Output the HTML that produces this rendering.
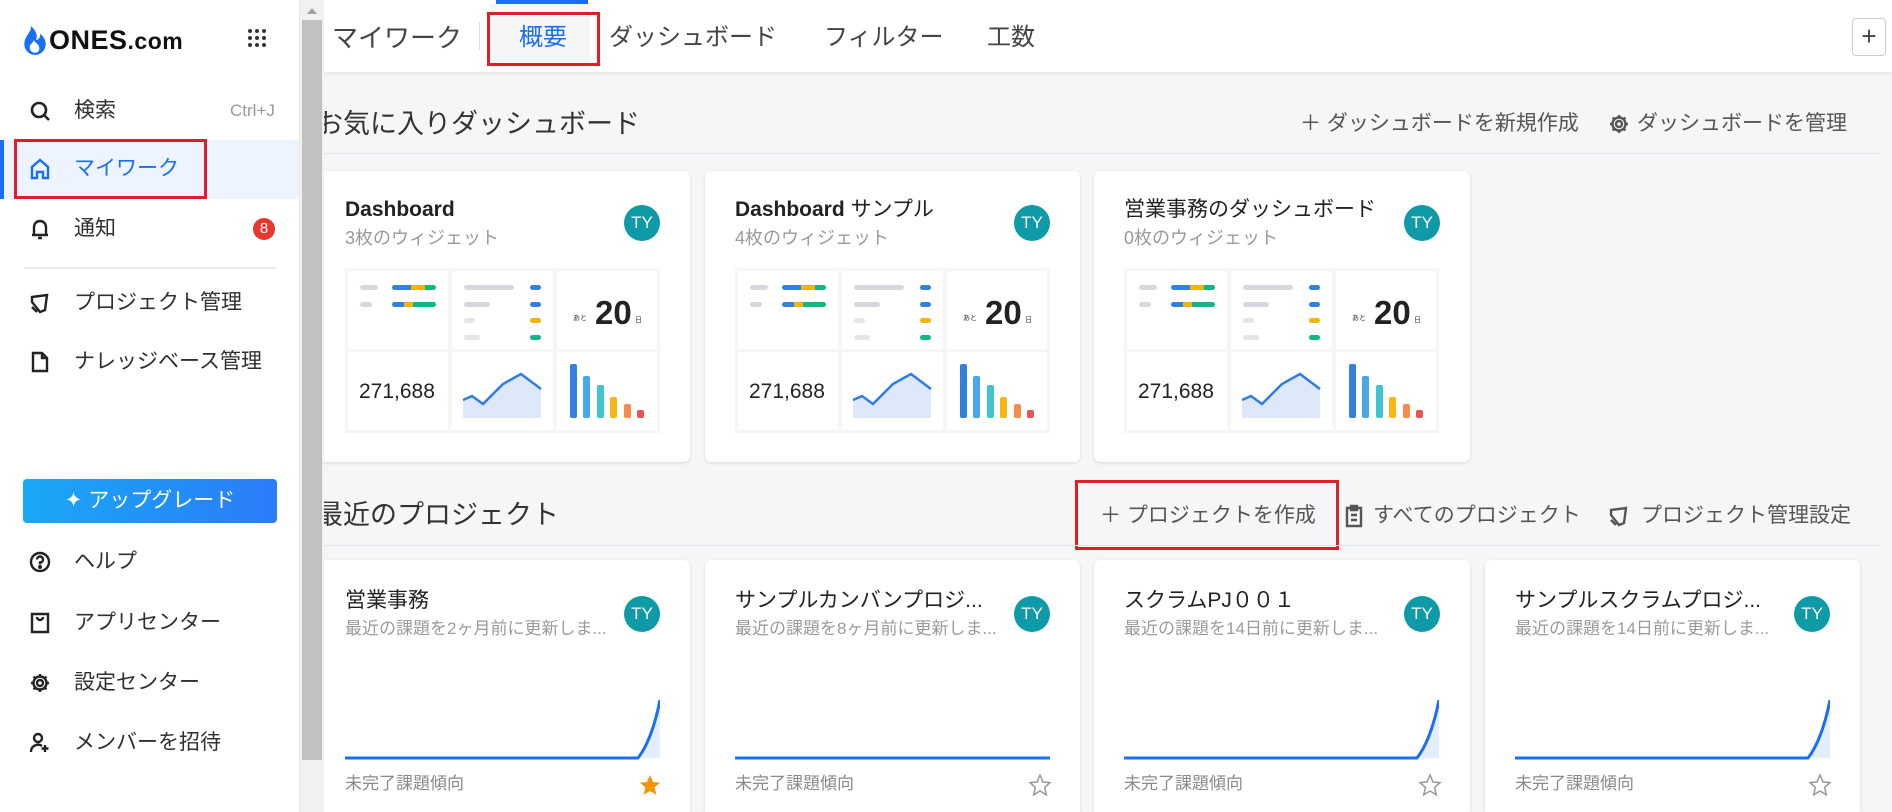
<!DOCTYPE html>
<html><head><meta charset="utf-8"><style>
*{box-sizing:border-box;margin:0;padding:0}
html{overflow:hidden;width:1892px;height:812px}
body{width:1892px;height:812px;overflow:hidden;background:#f5f6f8;font-family:"Liberation Sans","Noto Sans CJK JP",sans-serif;color:#2b2b2b;position:relative}
.a{position:absolute;white-space:nowrap}
#side{position:absolute;left:0;top:0;width:300px;height:812px;background:#fff;border-right:1px solid #e8e8e8}
.si{position:absolute;left:0;width:299px;height:40px;line-height:40px;font-size:21px;color:#303030}
.si svg{position:absolute;left:29px;top:9px}
.si span{position:absolute;left:74px}
#sb{position:absolute;left:300px;top:0;width:24px;height:812px;background:#f1f1f1}
#tabs{position:absolute;left:324px;top:0;width:1568px;height:72px;background:#fff;box-shadow:0 2px 4px rgba(0,0,0,.08)}
.tab{position:absolute;top:21px;font-size:24px;line-height:34px;color:#444}
.card{position:absolute;background:#fff;border-radius:6px;box-shadow:0 1px 3px rgba(0,0,0,.12)}
.ct{position:absolute;left:30px;top:24px;font-size:21px;line-height:30px;font-weight:bold;color:#222}
.cs{position:absolute;left:30px;top:55px;font-size:18px;line-height:24px;color:#9a9a9a}
.av{position:absolute;width:36px;height:36px;border-radius:50%;background:#0e9aa7;color:#fff;font-size:17px;line-height:36px;text-align:center;top:34px;right:30px}
.grid{position:absolute;left:30px;top:97px;width:315px;height:165px;background:#f5f6f8}
.cell{position:absolute;background:#fff}
.pill{position:absolute;height:5px;border-radius:3px}
.act{position:absolute;font-size:21px;line-height:28px;color:#555}
.pt{position:absolute;left:30px;top:26px;font-size:21px;line-height:30px;color:#222}
.ps{position:absolute;left:30px;top:57px;font-size:17px;line-height:24px;color:#9a9a9a}
.pf{position:absolute;left:30px;top:212px;font-size:17px;line-height:24px;color:#8a8a8a}
</style></head><body>
<div id="side">
 <svg class="a" style="left:22px;top:24px" width="26" height="32" viewBox="0 0 24 30"><path d="M8 2C9 8 2 11 2 19a10 10 0 0 0 20 0c0-5-3-8-5-10 0 4-2 6-4 6 2-5-1-10-5-13z" fill="#1a6ef5"/><path d="M12 27a5 5 0 0 1-5-5c0-3 3-4 4-7 1 3 5 4 5 7a4 4 0 0 1-4 5z" fill="#fff"/></svg>
 <div class="a" style="left:49px;top:24px;font-size:27px;font-weight:bold;line-height:32px;color:#111;letter-spacing:0.5px">ONES<span style="font-weight:bold;font-size:23px">.com</span></div>
 <svg class="a" style="left:247px;top:28px" width="20" height="20" viewBox="0 0 20 20" fill="#333"><circle cx="3" cy="3" r="2"/><circle cx="10" cy="3" r="2"/><circle cx="17" cy="3" r="2"/><circle cx="3" cy="10" r="2"/><circle cx="10" cy="10" r="2"/><circle cx="17" cy="10" r="2"/><circle cx="3" cy="17" r="2"/><circle cx="10" cy="17" r="2"/><circle cx="17" cy="17" r="2"/></svg>
 <div class="si" style="top:91px"><svg width="22" height="22" viewBox="0 0 22 22" fill="none" stroke="#222" stroke-width="2.6"><circle cx="10" cy="10" r="7"/><path d="M15 15l5 5"/></svg><span>検索</span><span style="left:230px;font-size:17px;color:#999">Ctrl+J</span></div>
 <div class="a" style="left:0;top:140px;width:299px;height:59px;background:#edf4ff;border-left:4px solid #1a6ef5"></div>
 <div class="si" style="top:149px;color:#1a6ef5"><svg width="22" height="22" viewBox="0 0 22 22" fill="none" stroke="#1a6ef5" stroke-width="2.4"><path d="M3 20V9l8-7 8 7v11h-5v-6h-6v6z"/></svg><span>マイワーク</span></div>
 <div class="a" style="left:14px;top:139px;width:193px;height:60px;border:3px solid #e31c2a"></div>
 <div class="si" style="top:209px"><svg width="22" height="22" viewBox="0 0 22 22" fill="none" stroke="#222" stroke-width="2.4"><path d="M5 17V9a6 6 0 0 1 12 0v8zM3 17h16M9 20h4"/></svg><span>通知</span><span style="left:253px;top:9px;width:22px;height:22px;border-radius:50%;background:#e8372d;color:#fff;font-size:15px;line-height:22px;text-align:center">8</span></div>
 <div class="a" style="left:24px;top:267px;width:252px;height:2px;background:#e8e8e8"></div>
 <div class="si" style="top:283px"><svg width="22" height="22" viewBox="0 0 22 22" fill="none" stroke="#222" stroke-width="2.4"><path d="M3 5l15-2-2 15-5 2-8-10zM3 15l5 5"/></svg><span>プロジェクト管理</span></div>
 <div class="si" style="top:342px"><svg width="22" height="22" viewBox="0 0 22 22" fill="none" stroke="#222" stroke-width="2.4"><path d="M4 2h9l5 5v13H4zM13 2v5h5"/></svg><span>ナレッジベース管理</span></div>
 <div class="a" style="left:23px;top:479px;width:254px;height:44px;border-radius:4px;background:linear-gradient(90deg,#1aa8f5,#2a7cf9);color:#fff;font-size:21px;line-height:44px;text-align:center">✦ アップグレード</div>
 <div class="si" style="top:542px"><svg width="22" height="22" viewBox="0 0 22 22" fill="none" stroke="#222" stroke-width="2.4"><circle cx="11" cy="11" r="9"/><path d="M8 8.5a3 3 0 1 1 3 3v2"/><circle cx="11" cy="16" r=".8" fill="#222"/></svg><span>ヘルプ</span></div>
 <div class="si" style="top:603px"><svg width="22" height="22" viewBox="0 0 22 22" fill="none" stroke="#222" stroke-width="2.4"><path d="M3 2h16v18H3zM8 5a3 3 0 0 0 6 0"/></svg><span>アプリセンター</span></div>
 <div class="si" style="top:663px"><svg width="22" height="22" viewBox="0 0 22 22" fill="none" stroke="#222" stroke-width="2.4"><circle cx="11" cy="11" r="3"/><path d="M11 2v3M11 17v3M2 11h3M17 11h3M4.6 4.6l2.1 2.1M15.3 15.3l2.1 2.1M4.6 17.4l2.1-2.1M15.3 6.7l2.1-2.1"/><circle cx="11" cy="11" r="6.5"/></svg><span>設定センター</span></div>
 <div class="si" style="top:723px"><svg width="22" height="22" viewBox="0 0 22 22" fill="none" stroke="#222" stroke-width="2.4"><circle cx="9" cy="6" r="4"/><path d="M2 20a7 7 0 0 1 11-6M16 13v7M12.5 16.5h7"/></svg><span>メンバーを招待</span></div>
</div>

<div id="tabs">
 <div class="a" style="left:172px;top:0;width:92px;height:4px;background:#1a6ef5"></div>
 <div class="tab" style="left:8px;font-size:26px">マイワーク</div>
 <div class="a" style="left:155px;top:22px;width:1px;height:28px;background:#ddd"></div>
 <div class="a" style="left:166px;top:4px;width:100px;height:64px;background:#f5f6f8"></div>
 <div class="tab" style="left:195px;color:#1a6ef5">概要</div>
 <div class="a" style="left:163px;top:12px;width:113px;height:54px;border:3px solid #e31c2a"></div>
 <div class="tab" style="left:285px">ダッシュボード</div>
 <div class="tab" style="left:500px">フィルター</div>
 <div class="tab" style="left:663px">工数</div>
 <div class="a" style="left:1528px;top:18px;width:34px;height:38px;border:1px solid #ccc;border-radius:4px;font-size:26px;line-height:34px;text-align:center;color:#444">+</div>
</div>

<div class="a" style="left:316px;top:105px;font-size:27px;line-height:38px;color:#333">お気に入りダッシュボード</div>
<div class="act" style="left:1300px;top:110px">＋ ダッシュボードを新規作成</div>
<svg class="a" style="left:1608px;top:113px" width="22" height="22" viewBox="0 0 22 22" fill="none" stroke="#555" stroke-width="2.4"><circle cx="11" cy="11" r="3"/><path d="M11 2v3M11 17v3M2 11h3M17 11h3M4.6 4.6l2.1 2.1M15.3 15.3l2.1 2.1M4.6 17.4l2.1-2.1M15.3 6.7l2.1-2.1"/><circle cx="11" cy="11" r="6.5"/></svg>
<div class="act" style="left:1637px;top:110px">ダッシュボードを管理</div>
<div class="a" style="left:324px;top:153px;width:1556px;height:1px;background:#e1e3e6"></div>

<div class="card" style="left:315px;top:171px;width:375px;height:291px">
 <div class="ct">Dashboard</div><div class="cs">3枚のウィジェット</div><div class="av">TY</div>
 <div class="grid"></div>
</div>
<div class="card" style="left:705px;top:171px;width:375px;height:291px">
 <div class="ct">Dashboard <span style="font-weight:normal">サンプル</span></div><div class="cs">4枚のウィジェット</div><div class="av">TY</div>
 <div class="grid"></div>
</div>
<div class="card" style="left:1094px;top:171px;width:376px;height:291px">
 <div class="ct" style="font-weight:normal">営業事務のダッシュボード</div><div class="cs">0枚のウィジェット</div><div class="av">TY</div>
 <div class="grid"></div>
</div>

<div class="a" style="left:316px;top:496px;font-size:27px;line-height:38px;color:#333">最近のプロジェクト</div>
<div class="act" style="left:1100px;top:502px">＋ プロジェクトを作成</div>
<div class="a" style="left:1075px;top:480px;width:264px;height:70px;border:3px solid #e31c2a"></div>
<svg class="a" style="left:1344px;top:504px" width="20" height="24" viewBox="0 0 20 24" fill="none" stroke="#555" stroke-width="2.4"><path d="M3 4h14v18H3zM7 2h6v4H7zM7 11h6M7 16h6"/></svg>
<div class="act" style="left:1373px;top:502px">すべてのプロジェクト</div>
<svg class="a" style="left:1608px;top:505px" width="22" height="22" viewBox="0 0 22 22" fill="none" stroke="#555" stroke-width="2.4"><path d="M3 5l15-2-2 15-5 2-8-10zM3 15l5 5"/></svg>
<div class="act" style="left:1641px;top:502px">プロジェクト管理設定</div>
<div class="a" style="left:324px;top:545px;width:1556px;height:1px;background:#e1e3e6"></div>

<div id="pc"></div>

<div id="sb"><div class="a" style="left:2px;top:20px;width:20px;height:740px;background:#c1c1c1"></div><div class="a" style="left:7px;top:8px;width:0;height:0;border-left:5px solid transparent;border-right:5px solid transparent;border-bottom:6px solid #a3a3a3"></div></div>

<script>
var widget='<div class="cell" style="left:3px;top:3px;width:100px;height:78px"><div class="pill" style="left:12px;top:14px;width:18px;background:#d5d8dd"></div><div class="pill" style="left:44px;top:14px;width:19px;background:#3181e0;border-radius:3px 0 0 3px"></div><div class="pill" style="left:63px;top:14px;width:14px;background:#f5b400;border-radius:0"></div><div class="pill" style="left:77px;top:14px;width:11px;background:#0cb885;border-radius:0 3px 3px 0"></div><div class="pill" style="left:12px;top:31px;width:12px;background:#d5d8dd"></div><div class="pill" style="left:44px;top:31px;width:12px;background:#3181e0;border-radius:3px 0 0 3px"></div><div class="pill" style="left:56px;top:31px;width:9px;background:#f5b400;border-radius:0"></div><div class="pill" style="left:65px;top:31px;width:23px;background:#0cb885;border-radius:0 3px 3px 0"></div></div>'
+'<div class="cell" style="left:107px;top:3px;width:101px;height:78px"><div class="pill" style="left:12px;top:14px;width:50px;background:#d5d8dd"></div><div class="pill" style="left:12px;top:31px;width:26px;background:#d5d8dd"></div><div class="pill" style="left:12px;top:47px;width:11px;background:#e3e5e8"></div><div class="pill" style="left:12px;top:64px;width:16px;background:#e3e5e8"></div><div class="pill" style="left:78px;top:14px;width:11px;background:#3181e0"></div><div class="pill" style="left:78px;top:31px;width:11px;background:#3181e0"></div><div class="pill" style="left:78px;top:47px;width:11px;background:#f5b400"></div><div class="pill" style="left:78px;top:64px;width:11px;background:#0cb885"></div></div>'
+'<div class="cell" style="left:212px;top:3px;width:100px;height:78px"><span class="a" style="left:16px;top:42px;font-size:7px;color:#333">あと</span><span class="a" style="left:38px;top:22px;font-size:33px;line-height:40px;color:#222;font-weight:bold">20</span><span class="a" style="left:78px;top:44px;font-size:7px;color:#333">日</span></div>'
+'<div class="cell" style="left:3px;top:84px;width:100px;height:78px"><span class="a" style="left:11px;top:27px;font-size:21px;line-height:26px;color:#222">271,688</span></div>'
+'<div class="cell" style="left:107px;top:84px;width:101px;height:78px"><svg width="101" height="78"><path d="M11 48L20 44L31 52L51 32L69 22L89 37V66H11Z" fill="#dde9fb"/><path d="M11 48L20 44L31 52L51 32L69 22L89 37" fill="none" stroke="#2f7ce6" stroke-width="2.5"/></svg></div>'
+'<div class="cell" style="left:212px;top:84px;width:100px;height:78px"><svg width="100" height="78"><rect x="13" y="12" width="7" height="54" rx="2" fill="#3181e0"/><rect x="26" y="24" width="7" height="42" rx="2" fill="#4aa8e8"/><rect x="40" y="33" width="7" height="33" rx="2" fill="#40c5d0"/><rect x="53" y="45" width="7" height="21" rx="2" fill="#fbb515"/><rect x="67" y="52" width="7" height="14" rx="2" fill="#f78c4a"/><rect x="80" y="58" width="7" height="8" rx="2" fill="#ec5454"/></svg></div>';
document.querySelectorAll('.grid').forEach(function(g){g.innerHTML=widget;});
var P=[[315,375,'営業事務','最近の課題を2ヶ月前に更新しま...',1],[705,375,'サンプルカンバンプロジ...','最近の課題を8ヶ月前に更新しま...',0],[1094,376,'スクラムPJ００１','最近の課題を14日前に更新しま...',2],[1485,375,'サンプルスクラムプロジ...','最近の課題を14日前に更新しま...',2]];
var h='';P.forEach(function(p){var w=315;var chart=p[4]==0?'<path d="M0 138H'+w+'" stroke="#1a6ef5" stroke-width="3" fill="none"/>':'<path d="M'+(w-22)+' 138Q'+(w-8)+' 120 '+w+' 80V138Z" fill="#e3eefc"/><path d="M0 138H'+(w-22)+'Q'+(w-8)+' 120 '+w+' 80" stroke="#1a6ef5" stroke-width="3" fill="none"/>';
var star=p[4]==1?'<svg class="a" style="right:28px;top:213px" width="24" height="24" viewBox="0 0 24 24"><path d="M12 2l3 7 7 .6-5.4 4.8 1.7 7.4L12 18l-6.3 3.8 1.7-7.4L2 9.6 9 9z" fill="#f59300"/></svg>':'<svg class="a" style="right:28px;top:213px" width="24" height="24" viewBox="0 0 24 24"><path d="M12 2l3 7 7 .6-5.4 4.8 1.7 7.4L12 18l-6.3 3.8 1.7-7.4L2 9.6 9 9z" fill="none" stroke="#999" stroke-width="1.5"/></svg>';
h+='<div class="card" style="left:'+p[0]+'px;top:560px;width:'+p[1]+'px;height:252px;border-radius:6px 6px 0 0"><div class="pt">'+p[2]+'</div><div class="ps">'+p[3]+'</div><div class="av" style="top:36px">TY</div><svg class="a" style="left:30px;top:60px" width="'+w+'" height="142">'+chart+'</svg><div class="pf">未完了課題傾向</div>'+star+'</div>';});
document.getElementById('pc').innerHTML=h;
</script>
</body></html>
